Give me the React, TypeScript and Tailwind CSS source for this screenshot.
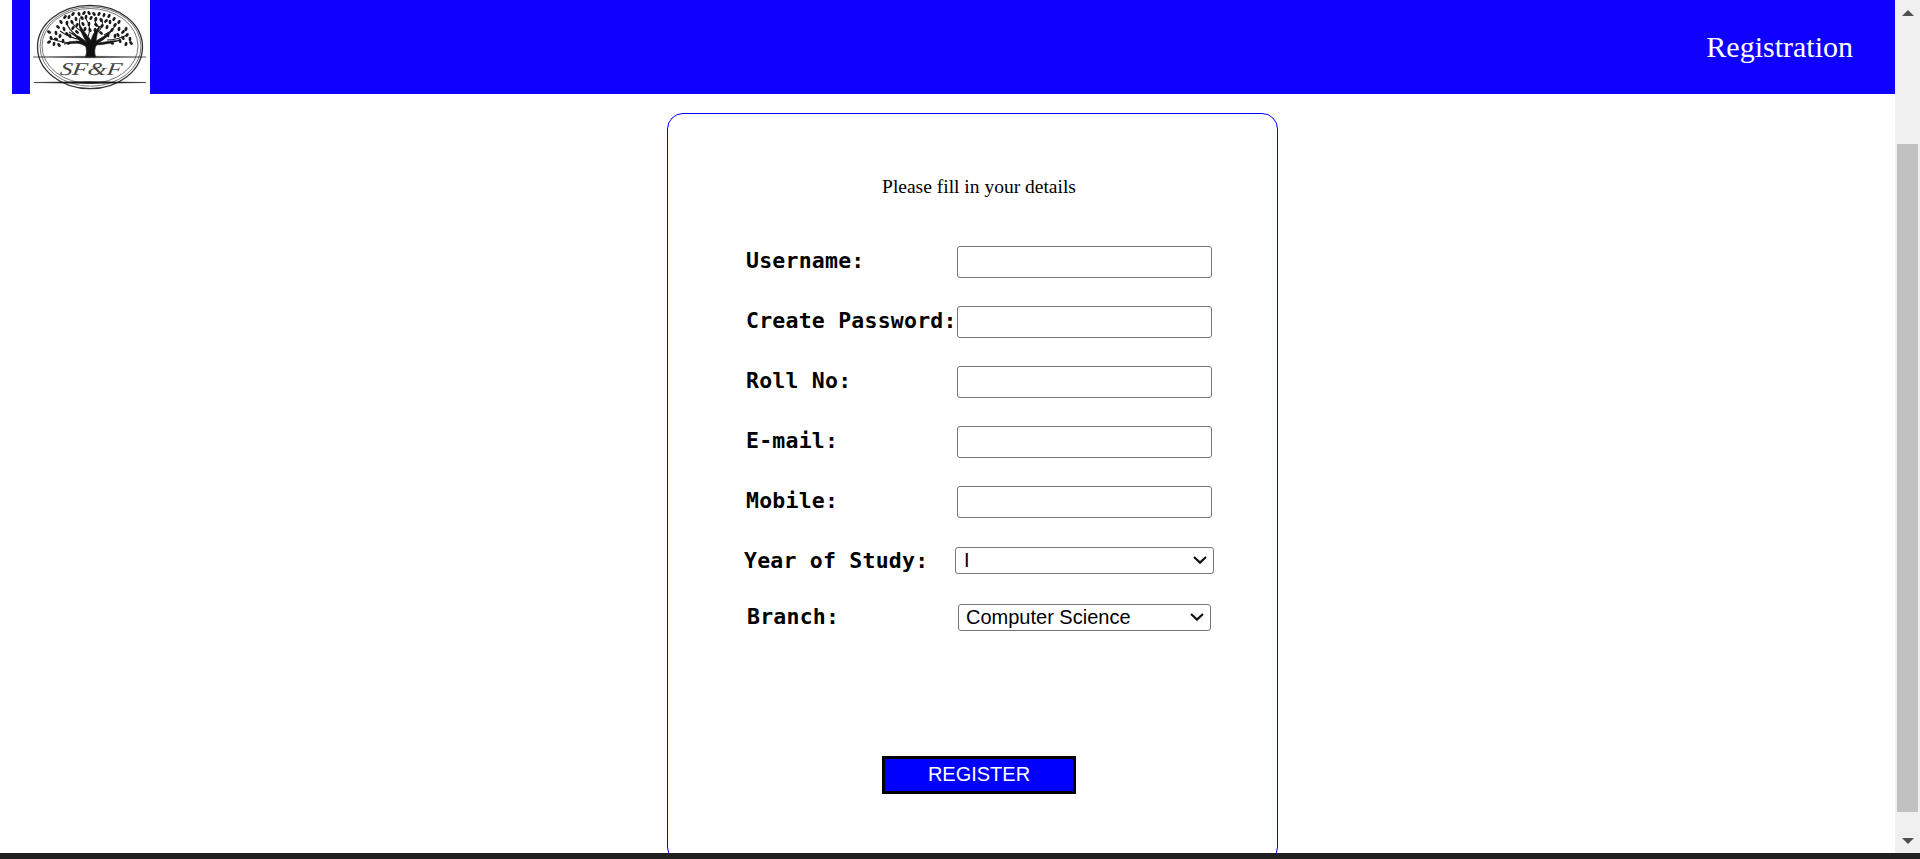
import React from "react";

const leaves: [number, number, number][] = [
  [49, 32, 35], [51, 38, 70], [49, 42, 150], [54, 44, 95], [56, 33, 80], [58, 27, 40], [56, 39, 20], [60, 36, 110],
  [61, 22, 60], [64, 29, 75], [65, 17, 130], [67, 23, 100], [69, 17, 110], [72, 22, 60], [73, 14, 130], [76, 19, 80],
  [77, 25, 120], [79, 14, 70], [82, 18, 50], [84, 13, 130], [86, 17, 100], [89, 13, 60], [91, 18, 120], [94, 14, 50],
  [96, 19, 90], [99, 14, 120], [101, 20, 70], [104, 15, 110], [106, 21, 140], [109, 16, 120], [110, 22, 90], [114, 19, 120],
  [115, 25, 130], [119, 22, 120], [119, 29, 100], [123, 32, 140], [126, 29, 110], [127, 35, 130], [123, 38, 60], [130, 39, 90],
  [131, 43, 50], [126, 44, 110], [120, 41, 70], [115, 36, 100], [112, 30, 120], [107, 27, 110], [102, 26, 130], [96, 25, 40],
  [89, 24, 100], [83, 24, 60], [73, 28, 120], [67, 34, 50], [63, 41, 90], [70, 36, 70], [77, 32, 40], [85, 29, 110],
  [90, 30, 60], [95, 30, 100], [101, 33, 40], [108, 35, 80], [112, 43, 30], [118, 35, 60], [59, 45, 50], [69, 43, 150],
];

function Logo() {
  return (
    <svg viewBox="30 0 120 94" className="block h-[94px] w-[120px] bg-white" fill="none" stroke="#222">
      <ellipse cx="90" cy="47" rx="52.5" ry="41.7" strokeWidth="1.3" stroke="#333" />
      <ellipse cx="90.5" cy="46.5" rx="50.5" ry="39.7" stroke="#777" strokeWidth="1" />
      <ellipse cx="90" cy="46" rx="48" ry="37.5" stroke="#666" strokeWidth=".9" />
      <path d="M33 57L90 56.2L146 57L90 57.8Z" fill="#222" strokeWidth=".4" />
      <path d="M34 82.5L90 81.5L146 82.5L90 83.5Z" fill="#111" strokeWidth=".6" />
      <path
        d="M85.5 57Q87.5 52 86 47Q83 43.5 75 43L64 44Q71 40.5 80 41Q76 36 69 32Q80 36 86.5 42Q81 34 79 24Q85 33 91 40.5Q93 32 100 26Q96.5 34 96 41Q103 37 112 31Q106 39 98 43Q110 41 121 40Q108 44.5 96.5 45Q93.5 49 95.5 57Z"
        fill="#111"
        strokeWidth=".7"
      />
      <path
        d="M81 40Q68 37 60 31M76 43Q62 43 52 39M83 34Q78 27 80 18M82 32Q75 27 71 22M88 37Q92 27 86 19M98 32Q104 26 102 19M104 35Q113 31 116 24M107 40Q117 40 127 35M76 35Q69 30 66 22M100 28Q94 23 95 18"
        strokeWidth="1.1"
      />
      <g fill="#1a1a1a" stroke="none">
        {leaves.map(([x, y, a]) => (
          <ellipse key={`${x}-${y}`} cx={x} cy={y} rx="2.2" ry="1.4" transform={`rotate(${a} ${x} ${y})`} />
        ))}
      </g>
      <text
        x="70"
        y="75"
        textLength="62"
        lengthAdjust="spacingAndGlyphs"
        transform="skewX(-8)"
        fill="#444"
        stroke="none"
        className="font-['Liberation_Serif',serif] text-[18px] italic"
      >
        SF&amp;F
      </text>
    </svg>
  );
}

function Label({ children, className = "" }: { children: React.ReactNode; className?: string }) {
  return (
    <label className={`shrink-0 whitespace-pre font-['DejaVu_Sans_Mono',monospace] text-[21.5px] font-bold tracking-[0.22px] ${className}`}>
      {children}
    </label>
  );
}

function Select({ value, className }: { value: string; className: string }) {
  return (
    <div className={`flex h-[27px] items-center justify-between rounded-[3px] border border-[#767676] bg-white pr-1.5 font-['Liberation_Sans',sans-serif] text-[20px] leading-[25px] ${className}`}>
      <span className="pb-px">{value}</span>
      <svg viewBox="0 0 14 8" className="mb-px h-2 w-3.5" fill="none" stroke="#111" strokeWidth="2.2">
        <path d="M1 1L7 6.6L13 1" />
      </svg>
    </div>
  );
}

const fields = ["Username:", "Create Password:", "Roll No:", "E-mail:", "Mobile:"];

export default function App() {
  return (
    <div className="flex h-[859px] w-full flex-col overflow-hidden bg-[#202020] font-['Liberation_Serif',serif] text-black">
      <div className="flex h-[853px] shrink-0 overflow-hidden bg-white">
        <main className="min-w-0 flex-1">
          <header className="ml-3 flex h-[94px] items-center justify-between bg-[#1000ff] pr-[42px] pl-[18px]">
            <Logo />
            <h1 className="text-[30px] leading-9 text-white">Registration</h1>
          </header>
          <form className="mt-[19px] ml-[667px] h-[750px] w-[611px] rounded-2xl border border-[#0000ff]">
            <p className="mt-[61px] pl-[13px] text-center text-[19.5px] leading-6">Please fill in your details</p>
            <div className="mt-[47px] flex flex-col gap-7 pl-[77px]">
              {fields.map((field) => (
                <div key={field} className="flex h-8">
                  <Label className="w-[212px] pl-px leading-[30px]">{field}</Label>
                  <input className="h-8 w-[255px] rounded-[3px] border border-[#767676] bg-white outline-none" />
                </div>
              ))}
            </div>
            <div className="mt-[29px] flex h-[27px] items-center pl-[76px]">
              <Label className="w-[211px] leading-8">Year of Study:</Label>
              <Select value="I" className="w-[259px] pl-2" />
            </div>
            <div className="mt-[30px] flex h-[27px] items-center pl-[78px]">
              <Label className="w-[212px] pb-0.5 pl-px leading-[30px]">Branch:</Label>
              <Select value="Computer Science" className="w-[253px] pl-[7px]" />
            </div>
            <button
              type="button"
              className="mt-[125px] ml-[214px] block h-[38px] w-[194px] border-[3px] border-black bg-[#0000ff] pb-0.5 font-['Liberation_Sans',sans-serif] text-[20px] leading-[30px] text-white"
            >
              REGISTER
            </button>
          </form>
        </main>
        <aside className="flex w-[25px] shrink-0 flex-col items-center bg-[#f0f0f0] pt-2.5">
          <svg viewBox="0 0 12 6" className="h-1.5 w-3" fill="#505050">
            <path d="M6 0L12 6H0Z" />
          </svg>
          <div className="mt-32 h-[668px] w-[21px] bg-[#c1c1c1]" />
          <svg viewBox="0 0 12 6" className="mt-[26px] h-1.5 w-3" fill="#505050">
            <path d="M0 0H12L6 6Z" />
          </svg>
        </aside>
      </div>
    </div>
  );
}
